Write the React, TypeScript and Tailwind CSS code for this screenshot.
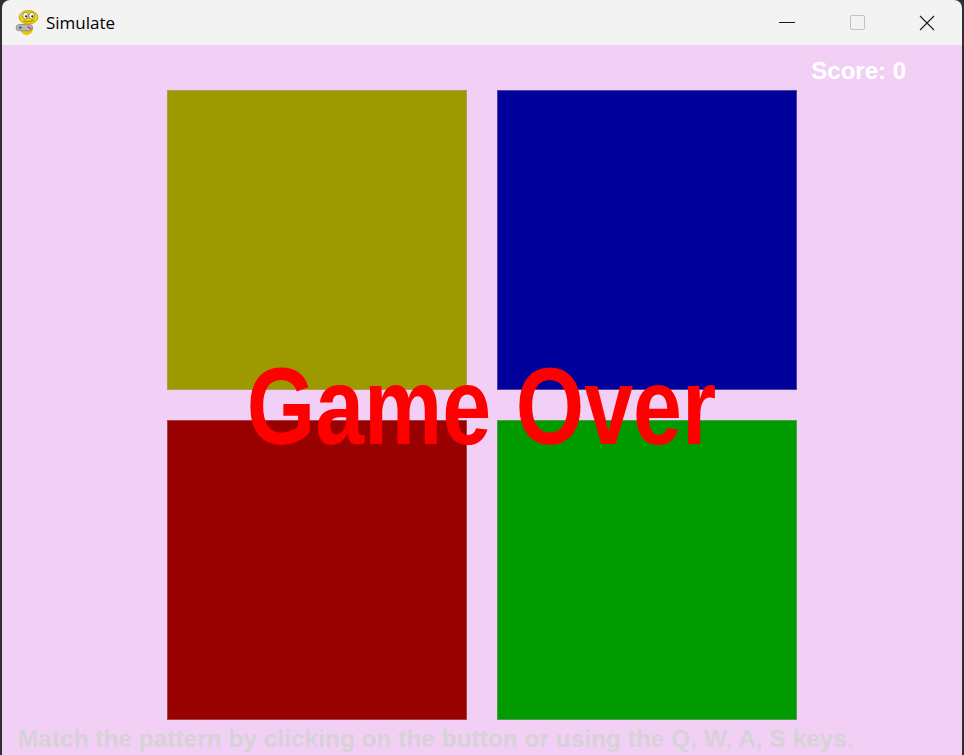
import React from 'react';

// pygame window showing the Simon game "Game Over" screen

const pads = [
  { key: 'q', color: 'bg-[#9c9a00]' },
  { key: 'w', color: 'bg-[#00009b]' },
  { key: 'a', color: 'bg-[#990000]' },
  { key: 's', color: 'bg-[#009b00]' },
];

function PygameIcon() {
  return (
    <svg width="25" height="27" viewBox="0 0 24 26">
      {/* body */}
      <path d="M6 14 C4 18 5 24 10 25 C15 25 18 22 17 17 Z" fill="#e8c800" />
      {/* head */}
      <ellipse cx="13" cy="8" rx="9" ry="6.5" fill="#f2d400" stroke="#b89a00" strokeWidth="0.8" />
      <ellipse cx="10" cy="6.5" rx="2.6" ry="3.2" fill="#fff" stroke="#555" strokeWidth="0.6" />
      <ellipse cx="16" cy="6.5" rx="2.6" ry="3.2" fill="#fff" stroke="#555" strokeWidth="0.6" />
      <circle cx="10.6" cy="7" r="1.1" fill="#222" />
      <circle cx="16.6" cy="7" r="1.1" fill="#222" />
      <path d="M8 11.5 Q13 13.5 18 11" fill="none" stroke="#8a7000" strokeWidth="0.8" />
      {/* controller */}
      <rect x="1" y="15" width="16" height="6" rx="3" fill="#b8b8b8" stroke="#777" strokeWidth="0.6" />
      <rect x="3.5" y="17.5" width="3" height="1" fill="#555" />
      <rect x="4.5" y="16.5" width="1" height="3" fill="#555" />
      <circle cx="13" cy="17.5" r="0.9" fill="#c03030" />
      <circle cx="14.8" cy="18.8" r="0.9" fill="#c03030" />
    </svg>
  );
}

export default function App() {
  return (
    <div className="w-[964px] h-[755px] overflow-hidden bg-[#2f2f35] px-[2px] flex flex-col">
      {/* Title bar */}
      <div className="h-[45px] shrink-0 bg-[#f3f3f3] rounded-t-lg flex items-center">
        <div className="ml-[12px] w-[26px] flex justify-center">
          <PygameIcon />
        </div>
        <span
          className="ml-[6px] text-[17px] text-black"
          style={{ fontFamily: '"Segoe UI", "Open Sans", "Noto Sans", sans-serif' }}
        >
          Simulate
        </span>
        <div className="ml-auto flex items-center h-full">
          <div className="w-[70px] h-full flex items-center justify-center">
            <div className="w-[16px] h-px bg-[#1a1a1a]" />
          </div>
          <div className="w-[70px] h-full flex items-center justify-center">
            <div className="w-[15px] h-[15px] border border-[#c2c2c2] rounded-[2px]" />
          </div>
          <div className="w-[70px] h-full flex items-center justify-center">
            <svg width="16" height="16" viewBox="0 0 16 16">
              <path d="M1 1 L15 15 M15 1 L1 15" stroke="#1a1a1a" strokeWidth="1.1" />
            </svg>
          </div>
        </div>
      </div>

      {/* Game surface */}
      <div
        className="relative flex-1 bg-[#f2d0f6] flex flex-col items-center pt-[45px]"
        style={{ fontFamily: '"Liberation Sans", Arial, sans-serif' }}
      >
        <div className="grid grid-cols-[300px_300px] grid-rows-[300px_300px] gap-[30px]">
          {pads.map((p) => (
            <div key={p.key} className={`${p.color} border border-[#c8a0b8]/40`} />
          ))}
        </div>

        <div className="self-start ml-[16px] mt-[7px] text-[24.3px] leading-none font-bold text-[#d6d2d6] tracking-[0.07px] whitespace-nowrap">
          Match the pattern by clicking on the button or using the Q, W, A, S keys.
        </div>

        {/* Score */}
        <div className="absolute top-[14px] right-[56px] text-[24px] leading-none font-bold text-white">
          Score: 0
        </div>

        {/* Game Over */}
        <div className="absolute left-0 right-0 top-[306px] flex justify-center">
          <div className="text-[110px] leading-none font-bold text-[#ff0000] scale-x-[0.8] whitespace-nowrap">
            Game Over
          </div>
        </div>
      </div>
    </div>
  );
}
